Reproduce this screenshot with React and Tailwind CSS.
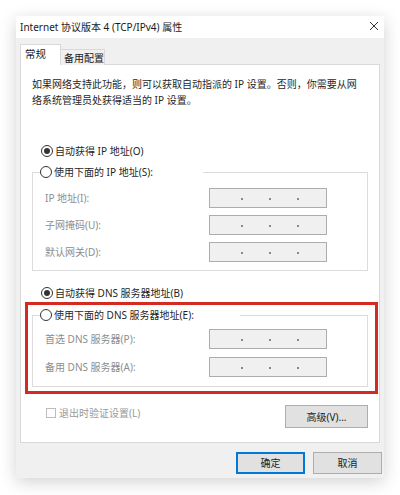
import React from 'react'

const FONT = { fontFamily: '"Noto Sans", "Noto Sans CJK SC", sans-serif' }

function Radio({ checked, label }) {
  return (
    <span className="flex items-center gap-[2px] bg-white">
      <span className="flex h-[12px] w-[12px] items-center justify-center rounded-full border border-[#333]">
        {checked && <span className="h-[6px] w-[6px] rounded-full bg-[#333]" />}
      </span>
      <span className="whitespace-nowrap text-[10px] leading-4 text-[#1f1f1f]">{label}</span>
    </span>
  )
}

function IpBox() {
  return (
    <div className="flex h-[20px] w-[118px] items-center gap-[26px] border border-[#adadad] bg-[#f0f0f0] pl-[31px]">
      <span className="mt-[1px] h-[2px] w-[2px] bg-[#8a8a8a]" />
      <span className="mt-[1px] h-[2px] w-[2px] bg-[#8a8a8a]" />
      <span className="mt-[1px] h-[2px] w-[2px] bg-[#8a8a8a]" />
    </div>
  )
}

function Field({ label }) {
  return (
    <div className="flex items-center">
      <span className="w-[176px] pl-[12px] text-[10px] leading-4 text-[#8d8d8d]">{label}</span>
      <IpBox />
    </div>
  )
}

function Group({ legend, legendWidth, children, className }) {
  return (
    <fieldset className={`border border-[#dcdcdc] ${className}`}>
      <legend className={`ml-[7px] ${legendWidth} bg-white`}>
        <Radio label={legend} />
      </legend>
      {children}
    </fieldset>
  )
}

export default function App() {
  return (
    <div className="h-[495px] w-[400px] bg-white pl-[16px] pt-[16px]" style={FONT}>
      <div className="flex h-[462px] w-[368px] flex-col shadow-[0_4px_16px_rgba(0,0,0,0.18)]">
        {/* title bar */}
        <div className="flex h-[22px] items-center justify-between bg-white pl-[4px] pr-[5px]">
          <span className="text-[10px] leading-4 text-[#1a1a1a]">Internet 协议版本 4 (TCP/IPv4) 属性</span>
          <svg width="10" height="10" viewBox="0 0 10 10" className="mb-[2px]">
            <path d="M1 1L9 9M9 1L1 9" stroke="#333" strokeWidth="1" fill="none" />
          </svg>
        </div>

        <div className="flex flex-1 flex-col bg-[#f0f0f0] px-[4px] pt-[6px]">
          {/* tabs */}
          <div className="relative z-10 flex h-[21px] items-end">
            <div className="flex h-[21px] w-[41px] items-center border border-b-0 border-[#d9d9d9] bg-white pb-[2px] pl-[4px] text-[10.5px] leading-4 text-[#1a1a1a]">
              常规
            </div>
            <div className="flex h-[16px] w-[44px] items-center whitespace-nowrap border border-b-0 border-l-0 border-[#d9d9d9] bg-[#f0f0f0] pl-[3px] text-[10px] leading-4 text-[#1a1a1a]">
              备用配置
            </div>
          </div>

          {/* panel */}
          <div className="-mt-[1px] flex h-[379px] flex-col border border-[#d9d9d9] bg-white pt-[11px]">
            <p className="px-[11px] text-[10px] leading-4 text-[#1f1f1f]">
              如果网络支持此功能，则可以获取自动指派的 IP 设置。否则，你需要从网
              <br />
              络系统管理员处获得适当的 IP 设置。
            </p>

            <div className="mt-[35px] pl-[20px]">
              <Radio checked label="自动获得 IP 地址(O)" />
            </div>

            <Group legend="使用下面的 IP 地址(S):" legendWidth="w-[163px]" className="mx-[11px] mt-[5px]">
              <div className="flex flex-col gap-[7px] pb-[8px] pt-[8px]">
                <Field label="IP 地址(I):" />
                <Field label="子网掩码(U):" />
                <Field label="默认网关(D):" />
              </div>
            </Group>

            <div className="mt-[14px] pl-[20px]">
              <Radio checked label="自动获得 DNS 服务器地址(B)" />
            </div>

            <div className="ml-[4px] mr-[1px] mt-[1px] border-[3px] border-[#d42a22] pb-[4px] pt-[2px]">
              <Group legend="使用下面的 DNS 服务器地址(E):" legendWidth="w-[200px]" className="ml-[4px] mr-[7px]">
                <div className="flex flex-col gap-[8px] pb-[9px] pt-[6px]">
                  <Field label="首选 DNS 服务器(P):" />
                  <Field label="备用 DNS 服务器(A):" />
                </div>
              </Group>
            </div>

            <div className="mt-[11px] flex items-start justify-between pl-[25px] pr-[11px]">
              <span className="flex items-center gap-[3px]">
                <span className="h-[10px] w-[10px] border border-[#bcbcbc] bg-white" />
                <span className="text-[10px] leading-4 text-[#9a9a9a]">退出时验证设置(L)</span>
              </span>
              <button className="flex h-[23px] w-[83px] items-center justify-center border border-[#adadad] bg-[#e1e1e1] text-[10px] leading-4 text-[#1a1a1a]">
                高级(V)...
              </button>
            </div>
          </div>

          {/* dialog buttons */}
          <div className="mt-[9px] flex justify-end gap-[8px]">
            <button className="flex h-[22px] w-[69px] items-center justify-center border-2 border-[#0078d7] bg-[#e1e1e1] text-[10px] leading-4 text-[#1a1a1a]">
              确定
            </button>
            <button className="-mr-[2px] flex h-[22px] w-[69px] items-center justify-center border border-[#adadad] bg-[#e1e1e1] text-[10px] leading-4 text-[#1a1a1a]">
              取消
            </button>
          </div>
        </div>
      </div>
    </div>
  )
}
